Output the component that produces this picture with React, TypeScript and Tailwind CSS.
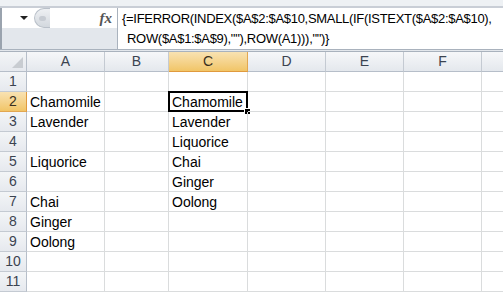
import React from "react";

const cols = ["A", "B", "C", "D", "E", "F", ""];
const widths = ["w-[78px]", "w-[64px]", "w-[79px]", "w-[78px]", "w-[78px]", "w-[78px]", "w-[40px]"];

const colA = ["", "Chamomile", "Lavender", "", "Liquorice", "", "Chai", "Ginger", "Oolong", "", ""];
const colC = ["", "Chamomile", "Lavender", "Liquorice", "Chai", "Ginger", "Oolong", "", "", "", ""];

const HeaderCell = ({ label, w, active }) => (
  <div
    className={`${w} h-full shrink-0 flex items-center justify-center border-r text-[14px] ${
      active
        ? "bg-gradient-to-b from-[#f9e2b2] to-[#f1c566] border-r-[#e2a751] border-b border-b-[#e09a3e] text-[#3a3020]"
        : "bg-gradient-to-b from-[#f6f7f9] to-[#e4e8ed] border-r-[#c4cad2] border-b border-b-[#b6bec9] text-[#3b4350]"
    }`}
  >
    {label}
  </div>
);

const Row = ({ n, a, c }) => {
  const active = n === 2;
  return (
    <div className="flex h-[20px]">
      <div
        className={`w-[27px] shrink-0 flex items-center justify-center border-r border-b text-[14px] ${
          active
            ? "bg-gradient-to-b from-[#f9e2b2] to-[#f1c566] border-r-[#e09a3e] border-b-[#e2a751] text-[#3a3020]"
            : "bg-gradient-to-b from-[#f3f5f7] to-[#e6e9ee] border-r-[#b6bec9] border-b-[#c4cad2] text-[#3b4350]"
        }`}
      >
        {n}
      </div>
      {widths.map((w, i) => (
        <div
          key={i}
          className={`${w} shrink-0 relative border-r border-b border-[#dadcdd] flex items-end pl-[3px] text-[14px] text-black leading-[18px] whitespace-nowrap`}
        >
          {i === 0 ? a : i === 2 ? c : ""}
          {i === 2 && active && (
            <div className="absolute -left-[1px] -top-[1px] w-[80px] h-[21px] border-2 border-black">
              <div className="absolute -right-[5px] -bottom-[5px] w-[7px] h-[7px] bg-black border border-white" />
            </div>
          )}
        </div>
      ))}
    </div>
  );
};

export default function App() {
  return (
    <div
      className="w-[503px] h-[295px] overflow-hidden bg-white select-none"
      style={{ fontFamily: '"Liberation Sans", Arial, sans-serif' }}
    >
      {/* toolbar remnant */}
      <div className="h-[8px] bg-[#eef1f4] border-b-2 border-[#c9ced6]" />

      {/* formula bar */}
      <div className="flex h-[41px] border-l-2 border-[#9aa3ae]">
        <div className="w-[116px] shrink-0 flex flex-col border-r border-[#a9b2bd]">
          <div className="h-[20px] bg-white flex items-center relative">
            <div className="w-[32px] flex justify-end pr-[6px]">
              <span className="block w-0 h-0 border-l-[4px] border-r-[4px] border-t-[4px] border-l-transparent border-r-transparent border-t-[#222]" />
            </div>
            <div className="w-[16px] h-[20px] rounded-l-full bg-gradient-to-b from-[#eef0f3] to-[#d3d8de] border border-[#b9c0c9] border-r-0 flex items-center justify-center">
              <div className="w-[7px] h-[5px] rounded-full bg-[#c7ccd3]" />
            </div>
            <div className="flex-1" />
            <span
              className="italic font-bold text-[15px] text-[#555] pr-[5px]"
              style={{ fontFamily: '"Liberation Serif", serif' }}
            >
              fx
            </span>
          </div>
          <div className="flex-1 bg-[#e3e7ec]" />
        </div>
        <div className="flex-1 bg-white pl-[4px] pt-[1px] text-[13px] tracking-[-0.3px] leading-[20px] text-black whitespace-nowrap">
          <div>{'{=IFERROR(INDEX($A$2:$A$10,SMALL(IF(ISTEXT($A$2:$A$10),'}</div>
          <div className="pl-[5px]">{'ROW($A$1:$A$9),""),ROW(A1))),"")}'}</div>
        </div>
      </div>

      <div className="h-[3px] border-t border-b border-[#a9b2bd] bg-[#e3e7ec]" />

      {/* column headers */}
      <div className="flex h-[20px]">
        <div className="w-[27px] shrink-0 relative bg-gradient-to-b from-[#f3f5f7] to-[#e6e9ee] border-r border-b border-[#b6bec9]">
          <div
            className="absolute right-[3px] bottom-[3px] w-[11px] h-[11px] bg-[#c8ccd1]"
            style={{ clipPath: "polygon(100% 0, 100% 100%, 0 100%)" }}
          />
        </div>
        {cols.map((c, i) => (
          <HeaderCell key={i} label={c} w={widths[i]} active={c === "C"} />
        ))}
      </div>

      {colA.map((a, i) => (
        <Row key={i} n={i + 1} a={a} c={colC[i]} />
      ))}
    </div>
  );
}
